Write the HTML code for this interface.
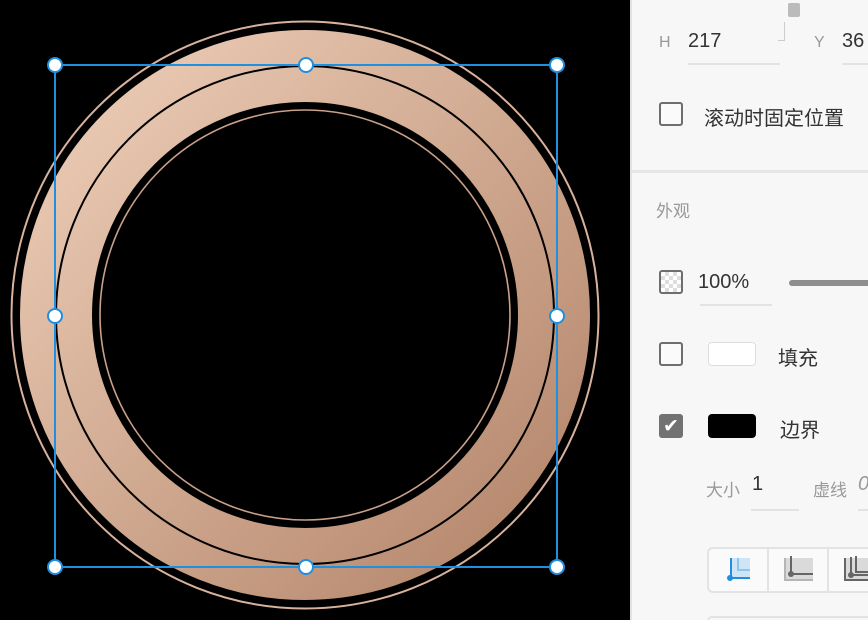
<!DOCTYPE html>
<html><head><meta charset="utf-8"><style>
*{margin:0;padding:0;box-sizing:border-box}
body{width:868px;height:620px;overflow:hidden;background:#000;position:relative;font-family:"Liberation Sans","Noto Sans CJK SC",sans-serif}
#panel{position:absolute;left:630px;top:0;width:238px;height:620px;background:#f7f7f7;border-left:2px solid #e2e2e2;overflow:hidden}
.a{position:absolute}
.lbl{color:#999;font-size:16px}
.val{color:#333;font-size:20px}
.ul{position:absolute;height:2px;background:#e3e3e3}
.cb{position:absolute;width:24px;height:24px;border:2px solid #6e6e6e;border-radius:3px;background:#fafafa}
.txt{color:#333;font-size:20px}
</style></head><body>
<svg class="a" style="left:0;top:0" width="630" height="620">
<defs><linearGradient id="g" x1="0" y1="0" x2="1" y2="1">
<stop offset="0" stop-color="#edcdb7"/><stop offset="1" stop-color="#b3856a"/></linearGradient></defs>
<rect width="630" height="620" fill="#000"/>
<circle cx="305" cy="315" r="293.5" fill="none" stroke="#d9b29c" stroke-width="2"/>
<circle cx="305" cy="315" r="249" fill="none" stroke="url(#g)" stroke-width="72" />
<circle cx="305" cy="315" r="249" fill="none" stroke="#000" stroke-width="2"/>
<circle cx="305" cy="315" r="205" fill="none" stroke="#c9a089" stroke-width="1.6"/>
<rect x="55" y="65" width="502" height="502" fill="none" stroke="#1f8fe0" stroke-width="2"/>
<g fill="#fff" stroke="#1f8fe0" stroke-width="2">
<circle cx="55" cy="65" r="7"/><circle cx="306" cy="65" r="7"/><circle cx="557" cy="65" r="7"/>
<circle cx="55" cy="316" r="7"/><circle cx="557" cy="316" r="7"/>
<circle cx="55" cy="567" r="7"/><circle cx="306" cy="567" r="7"/><circle cx="557" cy="567" r="7"/>
</g></svg>
<div id="panel">
<div class="a" style="left:156px;top:3px;width:12px;height:14px;border-radius:2px;background:#bbb"></div>
<div class="a" style="left:146px;top:22px;width:7px;height:19px;border-right:1px solid #ccc;border-bottom:1px solid #ccc"></div>
<div class="a lbl" style="left:27px;top:34px">H</div>
<div class="a val" style="left:56px;top:30px">217</div>
<div class="ul" style="left:56px;top:63px;width:92px"></div>
<div class="a lbl" style="left:182px;top:34px">Y</div>
<div class="a val" style="left:210px;top:30px">36</div>
<div class="ul" style="left:210px;top:63px;width:30px"></div>
<div class="cb" style="left:27px;top:102px"></div>
<div class="a txt" style="left:72px;top:102px">滚动时固定位置</div>
<div class="a" style="left:0;top:170px;width:238px;height:3px;background:#e6e6e6"></div>
<div class="a lbl" style="left:24px;top:197px;font-size:17px">外观</div>
<div class="a" style="left:27px;top:270px;width:24px;height:24px;border:2px solid #6e6e6e;border-radius:3px;background:repeating-conic-gradient(#ddd 0 25%,#fff 0 50%) 0 0/8px 8px"></div>
<div class="a val" style="left:66px;top:271px">100%</div>
<div class="ul" style="left:68px;top:304px;width:72px"></div>
<div class="a" style="left:157px;top:280px;width:90px;height:6px;border-radius:3px;background:#8e8e8e"></div>
<div class="cb" style="left:27px;top:342px"></div>
<div class="a" style="left:76px;top:342px;width:48px;height:24px;border:1px solid #ddd;border-radius:4px;background:#fff"></div>
<div class="a txt" style="left:146px;top:342px">填充</div>
<div class="a" style="left:27px;top:414px;width:24px;height:24px;border-radius:3px;background:#727272;color:#fff;font-size:19px;line-height:24px;text-align:center;font-family:'DejaVu Sans'">✔</div>
<div class="a" style="left:76px;top:414px;width:48px;height:24px;border-radius:4px;background:#000"></div>
<div class="a txt" style="left:148px;top:414px">边界</div>
<div class="a lbl" style="left:74px;top:476px;font-size:17px">大小</div>
<div class="a val" style="left:120px;top:473px">1</div>
<div class="ul" style="left:119px;top:509px;width:48px"></div>
<div class="a lbl" style="left:181px;top:476px;font-size:17px">虚线</div>
<div class="a val" style="left:226px;top:473px;color:#999;font-style:italic">0</div>
<div class="ul" style="left:226px;top:509px;width:20px"></div>
<div class="a" style="left:75px;top:547px;width:180px;height:46px;border:2px solid #e3e3e3;border-radius:6px;background:#fafafa"></div>
<div class="a" style="left:135px;top:549px;width:2px;height:42px;background:#e3e3e3"></div>
<div class="a" style="left:195px;top:549px;width:2px;height:42px;background:#e3e3e3"></div>
<svg class="a" style="left:75px;top:547px" width="163" height="46">
<rect x="23" y="11" width="20" height="20" fill="#cfe5f6"/>
<path d="M31 11V23H43" fill="none" stroke="#8cc7ee" stroke-width="2"/>
<path d="M24 11V31H43" fill="none" stroke="#1f8fe0" stroke-width="2"/>
<circle cx="23" cy="31" r="3" fill="#1f8fe0"/>
<rect x="78" y="11" width="28" height="22" fill="#dadada"/>
<path d="M78 11V33H106" fill="none" stroke="#b5b5b5" stroke-width="2"/>
<path d="M84 9V27H106" fill="none" stroke="#666" stroke-width="2"/>
<circle cx="84" cy="27" r="3" fill="#666"/>
<rect x="138" y="11" width="28" height="22" fill="#dadada"/>
<path d="M138 11V33H166M149 9V25H166" fill="none" stroke="#666" stroke-width="2"/>
<path d="M144 10V28H166" fill="none" stroke="#666" stroke-width="2"/>
<circle cx="144" cy="28" r="3" fill="#666"/>
</svg>
<div class="a" style="left:75px;top:616px;width:170px;height:10px;border:2px solid #e3e3e3;border-radius:6px"></div>
</div>
</body></html>
